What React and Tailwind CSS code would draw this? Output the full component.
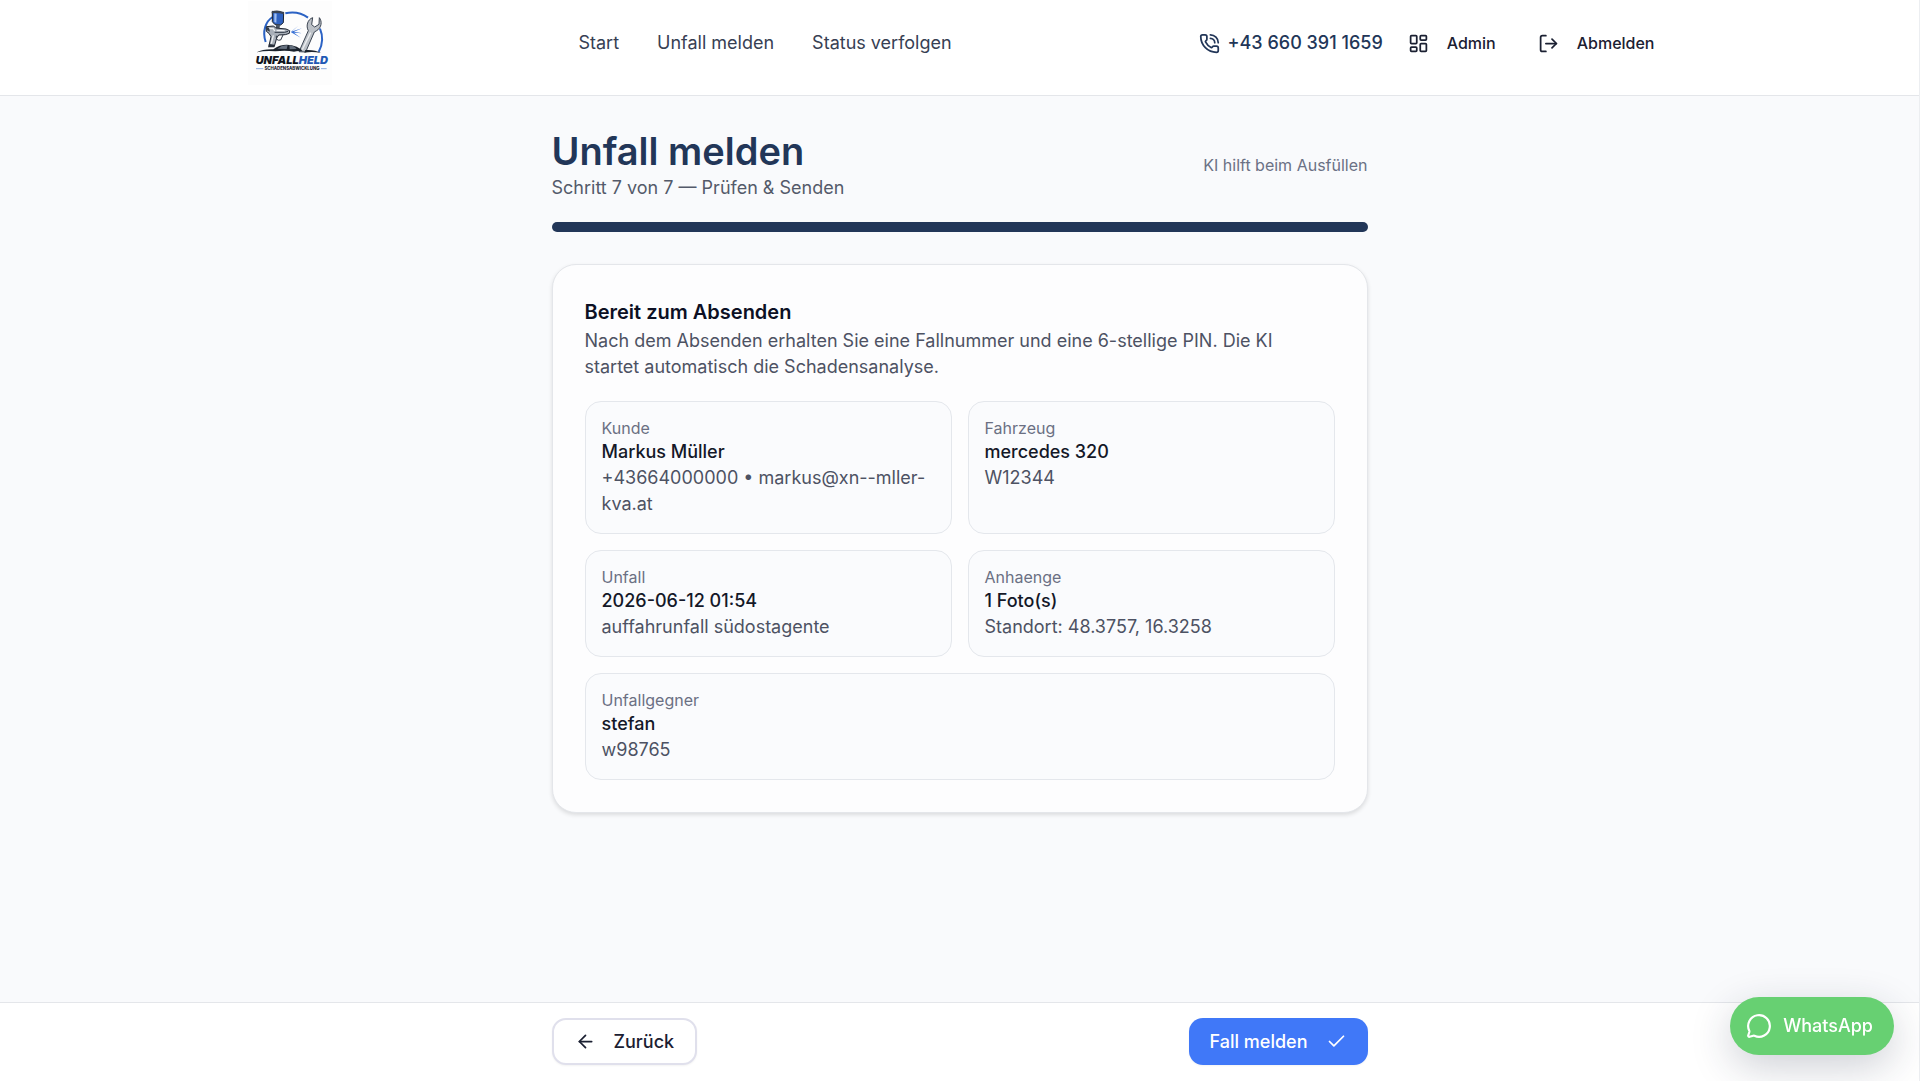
import React from "react";
import {
  ArrowLeft,
  Check,
  LayoutDashboard,
  LogOut,
  MessageCircle,
  PhoneCall,
} from "lucide-react";

const navLinks = ["Start", "Unfall melden", "Status verfolgen"];

const summary = [
  { label: "Kunde", title: "Markus Müller", detail: "+43664000000 • markus@xn--mller-kva.at" },
  { label: "Fahrzeug", title: "mercedes 320", detail: "W12344" },
  { label: "Unfall", title: "2026-06-12 01:54", detail: "auffahrunfall südostagente" },
  { label: "Anhaenge", title: "1 Foto(s)", detail: "Standort: 48.3757, 16.3258" },
  { label: "Unfallgegner", title: "stefan", detail: "w98765", wide: true },
];

function Logo() {
  return (
    <svg viewBox="24 5 252 252" className="size-21" role="img" aria-label="Unfallheld Schadensabwicklung">
      <rect x="24" y="5" width="252" height="252" fill="#fdfdfd" />
      {/* ring */}
      <g fill="none" stroke="#2b62c4" strokeWidth="6">
        <path d="M77 128C66 96 77 66 98 53" />
        <path d="M136 42C162 36 186 42 204 55" />
        <path d="M240 88C250 112 247 138 236 158" />
      </g>
      {/* spray gun */}
      <path d="M97 36l34 3-1 31-8 7-18-2-7-8z" fill="#2f62c0" stroke="#1d2430" strokeWidth="3" />
      <path d="M103 42l7 1-1 27-6-2z" fill="#9fc0f5" />
      <path d="M95 37q18-9 37 3v5q-19-6-37-3z" fill="#3a4453" />
      <path d="M107 75l13 2-1 9h-11z" fill="#4b5563" />
      <path d="M79 82l22-2 6 6 31 3 11 5-1 8-12 4-20 1-6 9-7 25-16-2 6-27-6-10-8-6z" fill="#a9b0b9" stroke="#1d2430" strokeWidth="3" strokeLinejoin="round" />
      <path d="M84 87l16 1 4 7M110 94h24M100 108l-6 25" fill="none" stroke="#eef0f2" strokeWidth="4" />
      <path d="M78 82l9 3 3 12-9-4z" fill="#303946" />
      <path d="M104 99h30l10-3" fill="none" stroke="#303946" strokeWidth="3" />
      <path d="M109 109q-2 17 13 13l7-15" fill="none" stroke="#303946" strokeWidth="3" />
      <path d="M87 134l17 2-1 8H84z" fill="#28303c" />
      <path d="M153 97l33-10-24 10 25 5-25-2 20 15-29-16 22-20z" fill="#3770d5" />
      {/* wrench */}
      <path d="M177 157l28-63c-8-14-2-34 13-39l-3 21 9 7 13-8 1-20c9 11 7 30-8 39l-7 4-26 60z" fill="#bcc1c7" stroke="#3c4552" strokeWidth="3" strokeLinejoin="round" />
      <path d="M187 151l25-51" stroke="#eceef0" strokeWidth="4" />
      {/* car */}
      <path d="M50 159q18-10 50-9 30-22 70-8 13 6 18 14-14-3-26 1-24-5-56-1-28-3-56 3z" fill="#1b222c" />
      <path d="M196 152q28-2 47 9-26-6-50-1z" fill="#1b222c" />
      <path d="M112 148q16-12 31-10l-3 11zM148 138q14 1 22 11l-21 1z" fill="#66717f" />
      <text x="47" y="195" fontFamily="Inter, sans-serif" fontSize="33" fontWeight="900" fontStyle="italic" fill="#10141c">
        UNFALL<tspan fill="#2258b4">HELD</tspan>
      </text>
      <path d="M48 208h22M243 208h17" stroke="#5b86d0" strokeWidth="2" />
      <text x="156" y="212" textAnchor="middle" fontFamily="Inter, sans-serif" fontSize="13" fontWeight="800" fill="#1d2430">
        SCHADENSABWICKLUNG
      </text>
    </svg>
  );
}

function Header() {
  return (
    <header className="bg-white border-b border-[#e4e6ea] px-4 pb-[9px]">
      <div className="mx-auto flex h-[86px] max-w-[1424px] items-center justify-between">
        <a href="#start">
          <Logo />
        </a>
        <nav className="flex items-center gap-[38px] text-[#374053]">
          {navLinks.map((link) => (
            <a key={link} href="#nav">{link}</a>
          ))}
        </nav>
        <div className="flex items-center gap-2">
          <a href="tel:+436603911659" className="flex items-center gap-2 font-medium text-[#223658]">
            <PhoneCall size={21} strokeWidth={2} />
            +43 660 391 1659
          </a>
          <button className="flex items-center gap-[18px] px-[17px] text-[16px] font-medium text-[#1b2032]">
            <LayoutDashboard size={21} strokeWidth={2} />
            Admin
          </button>
          <button className="flex items-center gap-[18px] px-[17px] text-[16px] font-medium text-[#1b2032]">
            <LogOut size={21} strokeWidth={2} />
            Abmelden
          </button>
        </div>
      </div>
    </header>
  );
}

function SummaryBox({ label, title, detail, wide }) {
  return (
    <div className={`rounded-2xl border border-[#e4e7ec] bg-[#fafbfd] p-4 ${wide ? "col-span-2" : ""}`}>
      <p className="text-[16px] leading-[21px] text-[#6b7083]">{label}</p>
      <p className="font-medium text-[#141828]">{title}</p>
      <p className="text-[#4d5263]">{detail}</p>
    </div>
  );
}

export default function App() {
  return (
    <div className="flex min-h-screen flex-col border-r border-[#eceef1] bg-[#f9fafc] font-['Inter',sans-serif] text-[18px] leading-[26px]">
      <Header />

      <main className="mx-auto w-full max-w-[816px] grow pt-8 pb-12">
        <div className="flex items-center justify-between">
          <div>
            <h1 className="text-[38px] leading-[47px] font-semibold text-[#223658]">Unfall melden</h1>
            <p className="text-[#545a6a]">Schritt 7 von 7 — Prüfen &amp; Senden</p>
          </div>
          <p className="text-[16px] text-[#6b7185]">KI hilft beim Ausfüllen</p>
        </div>

        <div className="mt-[21px] h-[10px] rounded-full bg-[#223658]" />

        <section className="mt-8 rounded-3xl border border-[#e4e6ea] bg-[#fdfdfe] p-8 shadow-[0_2px_4px_rgba(0,0,0,0.12)]">
          <h2 className="text-[20px] leading-[31px] font-semibold text-[#0c1024]">Bereit zum Absenden</h2>
          <p className="pr-8 text-[#4d5263]">
            Nach dem Absenden erhalten Sie eine Fallnummer und eine 6-stellige PIN. Die KI startet
            automatisch die Schadensanalyse.
          </p>
          <div className="mt-[21px] grid grid-cols-2 gap-4">
            {summary.map((item) => (
              <SummaryBox key={item.label} {...item} />
            ))}
          </div>
        </section>
      </main>

      <footer className="sticky bottom-0 border-t border-[#e4e6ea] bg-white pt-[15px] pb-4">
        <div className="mx-auto flex max-w-[816px] items-center justify-between">
          <button className="flex h-[47px] items-center gap-[18px] rounded-[14px] border-2 border-[#e0e0ec] bg-white px-[21px] font-medium text-[#1b2032] shadow-xs">
            <ArrowLeft size={21} strokeWidth={2} />
            Zurück
          </button>
          <button className="flex h-[47px] items-center gap-[18px] rounded-[14px] bg-[#4078f8] px-[21px] font-medium text-white shadow-xs">
            Fall melden
            <Check size={21} strokeWidth={2} />
          </button>
        </div>
      </footer>

      <a
        href="#whatsapp"
        className="fixed right-[26px] bottom-[26px] flex h-[58px] items-center gap-[11px] rounded-full bg-[#67d072] pr-[21px] pl-4 font-medium text-white shadow-[0_12px_40px_rgba(30,40,70,0.22)]"
      >
        <MessageCircle size={26} strokeWidth={2} />
        WhatsApp
      </a>
    </div>
  );
}
